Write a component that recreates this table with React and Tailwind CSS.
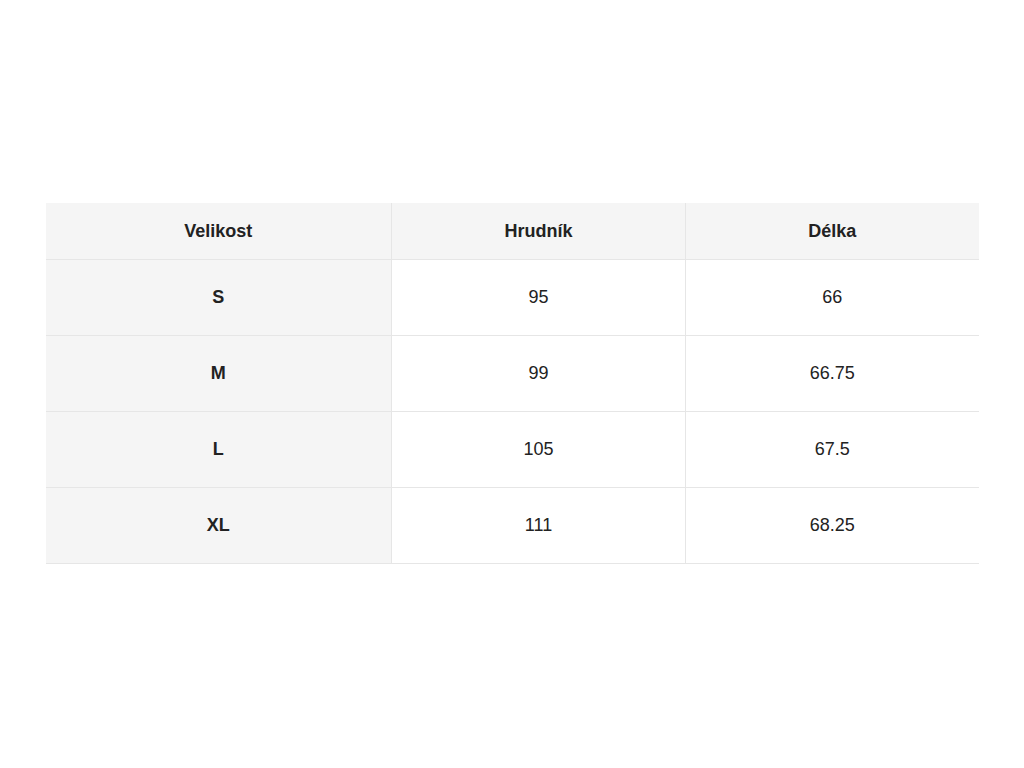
import React from "react";

const rows = [
  ["S", "95", "66"],
  ["M", "99", "66.75"],
  ["L", "105", "67.5"],
  ["XL", "111", "68.25"],
];

export default function App() {
  return (
    <div
      className="w-[1024px] h-[768px] bg-white flex items-center justify-center text-[#222222]"
      style={{ fontFamily: '"Liberation Sans", Arial, sans-serif' }}
    >
      <table className="w-[933px] border-collapse text-[18px] table-fixed mb-[1px]">
        <colgroup>
          <col className="w-[346px]" />
          <col className="w-[294px]" />
          <col className="w-[293px]" />
        </colgroup>
        <thead>
          <tr className="bg-[#f5f5f5] h-[57px] border-b border-[#e6e6e6]">
            <th className="font-bold text-center border-r border-[#e6e6e6] p-0">Velikost</th>
            <th className="font-bold text-center border-r border-[#e6e6e6] p-0">Hrudník</th>
            <th className="font-bold text-center p-0">Délka</th>
          </tr>
        </thead>
        <tbody>
          {rows.map((r) => (
            <tr key={r[0]} className="h-[76px] border-b border-[#e6e6e6]">
              <td className="bg-[#f5f5f5] font-bold text-center border-r border-[#e6e6e6] p-0">{r[0]}</td>
              <td className="text-center border-r border-[#e6e6e6] p-0">{r[1]}</td>
              <td className="text-center p-0">{r[2]}</td>
            </tr>
          ))}
        </tbody>
      </table>
    </div>
  );
}
